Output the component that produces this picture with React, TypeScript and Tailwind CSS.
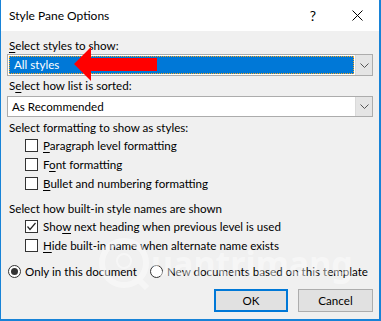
import React from 'react';

const font = { fontFamily: 'Lato, "Noto Sans", sans-serif' };

function U({ children }: { children: React.ReactNode }) {
  return <span className="underline underline-offset-2">{children}</span>;
}

function Checkbox({ checked, children }: { checked?: boolean; children: React.ReactNode }) {
  return (
    <div className="flex h-[19px] items-center pl-[18px]">
      <div className="relative h-[13px] w-[13px] shrink-0 border border-[#333333] bg-white">
        {checked && (
          <svg className="absolute left-0 top-0" width="11" height="11" viewBox="0 0 11 11">
            <path d="M1.5 5.5 L4 8.5 L9.5 2" fill="none" stroke="#222" strokeWidth="1.2" />
          </svg>
        )}
      </div>
      <span className="ml-[5px] whitespace-nowrap">{children}</span>
    </div>
  );
}

function Radio({ checked, children }: { checked?: boolean; children: React.ReactNode }) {
  return (
    <div className="flex items-center whitespace-nowrap">
      <div className="flex h-[13px] w-[13px] shrink-0 items-center justify-center rounded-full border border-[#333333] bg-white">
        {checked && <div className="h-[7px] w-[7px] rounded-full bg-[#333333]" />}
      </div>
      <span className="ml-[4px]">{children}</span>
    </div>
  );
}

function Chevron() {
  return (
    <div className="flex w-[17px] items-center justify-center border-l border-[#dadada] bg-[#e5e5e5]">
      <svg width="9" height="5" viewBox="0 0 9 5">
        <path d="M0.5 0.5 L4.5 4.5 L8.5 0.5" fill="none" stroke="#555" strokeWidth="1" />
      </svg>
    </div>
  );
}

export default function App() {
  return (
    <div
      className="relative h-[321px] w-[381px] overflow-hidden border-b-2 border-l border-r-2 border-[#1883d7] bg-[#f0f0f0] text-[11.6px] leading-[16px] text-black"
      style={font}
    >
      {/* Title bar */}
      <div className="flex h-[31px] items-center bg-white pl-[8px]">
        <span className="text-[12px]">Style Pane Options</span>
        <span className="ml-auto mr-[36px] text-[14px]">?</span>
        <svg className="mr-[16px]" width="11" height="11" viewBox="0 0 11 11">
          <path d="M0.5 0.5 L10.5 10.5 M10.5 0.5 L0.5 10.5" stroke="#000" strokeWidth="1" />
        </svg>
      </div>

      <div className="flex flex-col px-[6px]">
        <div className="mt-[7px] h-[16px] pl-[2px]">
          <U>S</U>elect styles to show:
        </div>
        <div className="flex h-[22px] border border-[#acacac] bg-white">
          <div className="m-[1px] flex flex-1 items-center border border-dotted border-[#f5a623] bg-[#0078d7] pl-[4px] text-white">
            All styles
          </div>
          <Chevron />
        </div>

        <div className="mt-[2px] h-[16px] pl-[2px]">
          S<U>e</U>lect how list is sorted:
        </div>
        <div className="mt-[2px] flex h-[21px] border border-[#acacac] bg-white">
          <div className="flex flex-1 items-center pl-[4px]">As Recommended</div>
          <Chevron />
        </div>

        <div className="mt-[3px] h-[16px] pl-[2px]">Select formatting to show as styles:</div>
        <Checkbox>
          <U>P</U>aragraph level formatting
        </Checkbox>
        <Checkbox>
          F<U>o</U>nt formatting
        </Checkbox>
        <Checkbox>
          <U>B</U>ullet and numbering formatting
        </Checkbox>

        <div className="mt-[8px] h-[16px] pl-[2px]">Select how built-in style names are shown</div>
        <Checkbox checked>
          Sho<U>w</U> next heading when previous level is used
        </Checkbox>
        <Checkbox>
          <U>H</U>ide built-in name when alternate name exists
        </Checkbox>

        <div className="mt-[7px] flex h-[19px] items-center gap-[13px] pl-[1px]">
          <Radio checked>Only in this document</Radio>
          <Radio>New documents based on this template</Radio>
        </div>

        <div className="mt-[8px] flex justify-end gap-[10px]">
          <button className="h-[23px] w-[74px] border-2 border-[#0078d7] bg-[#e1e1e1]">OK</button>
          <button className="h-[23px] w-[75px] border border-[#adadad] bg-[#e1e1e1]">Cancel</button>
        </div>
      </div>

      {/* Watermark */}
      <div className="pointer-events-none absolute left-[96px] top-[236px] flex items-center opacity-45">
        <svg width="54" height="54" viewBox="0 0 54 54">
          <circle cx="27" cy="27" r="22" fill="none" stroke="#ffffff" strokeWidth="6" />
          <path d="M40 42 L50 52" stroke="#ffffff" strokeWidth="6" />
          <circle cx="27" cy="25" r="7" fill="none" stroke="#ffffff" strokeWidth="2" />
        </svg>
        <span className="text-[34px] font-bold leading-none text-white" style={{ fontFamily: '"Noto Sans", sans-serif' }}>
          uantrimang
        </span>
      </div>

      {/* Red arrow */}
      <svg className="pointer-events-none absolute left-[72px] top-[46px]" width="86" height="36" viewBox="0 0 86 36">
        <path d="M1 18 L18 1 L18 12 L84 12 L84 25 L18 25 L18 35 Z" fill="#ff0000" />
      </svg>
    </div>
  );
}
